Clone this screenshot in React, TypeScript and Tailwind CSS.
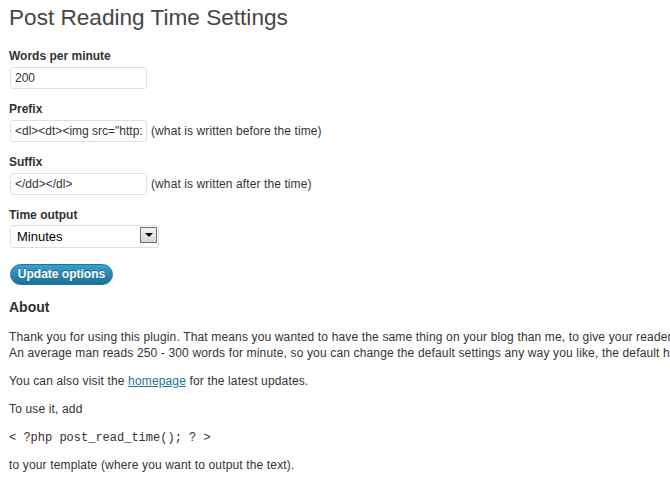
export default function App() {
  return (
    <div className="min-h-[484px] w-[670px] overflow-hidden bg-white text-[#333] font-['Liberation_Sans',Arial,sans-serif]">
      <div className="pl-[9px] pt-[3px]">
        <h2 className="text-[22.6px] leading-[29px] text-[#464646] whitespace-nowrap">Post Reading Time Settings</h2>

        <form className="mt-[16px] flex flex-col" onSubmit={(e) => e.preventDefault()}>
          <label className="block text-[12px] leading-[16px] font-bold">Words per minute</label>
          <div className="mt-[3px] mb-[12px] flex items-center">
            <input
              defaultValue="200"
              className="ml-px h-[22px] w-[137px] rounded-[3px] border border-[#dfdfdf] bg-white px-[4px] text-[12px] text-[#333] outline-none"
            />
          </div>

          <label className="block text-[12px] leading-[16px] font-bold">Prefix</label>
          <div className="mt-[3px] mb-[12px] flex items-center gap-[4px] whitespace-nowrap">
            <input
              defaultValue={'<dl><dt><img src="http://example.com/clock.png" /></dt><dd>'}
              className="ml-px h-[22px] w-[137px] rounded-[3px] border border-[#dfdfdf] bg-white px-[4px] text-[12px] text-[#333] outline-none"
            />
            <span className="text-[12px] tracking-[0.1px]">(what is written before the time)</span>
          </div>

          <label className="block text-[12px] leading-[16px] font-bold">Suffix</label>
          <div className="mt-[3px] mb-[12px] flex items-center gap-[4px] whitespace-nowrap">
            <input
              defaultValue="</dd></dl>"
              className="ml-px h-[22px] w-[137px] rounded-[3px] border border-[#dfdfdf] bg-white px-[4px] text-[12px] text-[#333] outline-none"
            />
            <span className="text-[12px] tracking-[0.1px]">(what is written after the time)</span>
          </div>

          <label className="block text-[12px] leading-[16px] font-bold">Time output</label>
          <div className="relative ml-px mt-[1px] h-[23px] w-[149px]">
            <select
              defaultValue="minutes"
              className="h-full w-full appearance-none rounded-[3px] border border-[#dfdfdf] bg-white pl-[6px] text-[13px] text-black outline-none"
            >
              <option value="minutes">Minutes</option>
              <option value="seconds">Seconds</option>
            </select>
            <span className="pointer-events-none absolute right-[2px] top-[3px] flex h-[16px] w-[17px] items-center justify-center border border-[#707070] bg-gradient-to-b from-[#f2f2f2] to-[#d6d6d6]">
              <span className="h-0 w-0 border-x-[4px] border-t-[4px] border-x-transparent border-t-black" />
            </span>
          </div>

          <div className="mt-[14px]">
            <button
              type="submit"
              className="ml-px h-[21px] w-[103px] rounded-full border border-[#21759b] bg-gradient-to-b from-[#3a9fcf] to-[#1f6f94] text-[12px] font-bold text-white [text-shadow:0_-1px_0_rgba(0,0,0,0.3)]"
            >
              Update options
            </button>
          </div>
        </form>

        <h3 className="mt-[13px] text-[14px] leading-[18px] font-bold">About</h3>

        <div className="mt-[13px] flex flex-col gap-[12px] text-[12px] leading-[16px] tracking-[0.15px] whitespace-nowrap">
          <p>
            Thank you for using this plugin. That means you wanted to have the same thing on your blog than me, to give your readers an idea of how long it takes to read a post.
            <br />
            An average man reads 250 - 300 words for minute, so you can change the default settings any way you like, the default here is 200 words per minute.
          </p>
          <p>
            You can also visit the{' '}
            <a href="#" className="text-[#21759b] underline">homepage</a>{' '}
            for the latest updates.
          </p>
          <p>To use it, add</p>
          <p className="h-[16px] pt-[1px] font-['Liberation_Mono','Courier_New',monospace] tracking-normal">{'< ?php post_read_time(); ? >'}</p>
          <p>to your template (where you want to output the text).</p>
        </div>
      </div>
    </div>
  )
}
